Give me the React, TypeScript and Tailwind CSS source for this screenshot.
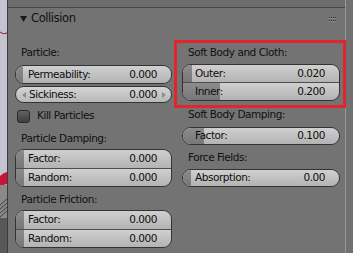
import React from 'react';

const font = { fontFamily: '"DejaVu Sans", "Liberation Sans", sans-serif' };

interface FieldRow {
  label: string;
  value: string;
  fill: number;
}

const Row: React.FC<FieldRow & { h: string; pr?: string }> = ({ label, value, fill, h, pr = 'pr-[14px]' }) => (
  <div className={`relative ${h} bg-linear-to-b from-[#d0d0d0] to-[#b3b3b3]`}>
    <div
      className="absolute left-0 top-0 bottom-0 bg-linear-to-b from-[#8c8c8c] to-[#777]"
      style={{ width: fill }}
    />
    <div className={`relative h-full flex items-center justify-between pl-[12px] ${pr} text-[#0e0e0e]`}>
      <span>{label}</span>
      <span>{value}</span>
    </div>
  </div>
);

const FieldBlock: React.FC<{ rows: FieldRow[]; heights: string[]; className?: string }> = ({
  rows,
  heights,
  className = '',
}) => (
  <div className={`rounded-[9px] border border-[#333] overflow-hidden ${className}`}>
    {rows.map((r, i) => (
      <div key={r.label} className={i > 0 ? 'border-t border-[#4d4d4d]' : ''}>
        <Row {...r} h={heights[i]} />
      </div>
    ))}
  </div>
);

const Label: React.FC<{ text: string; className?: string }> = ({ text, className = '' }) => (
  <div className={`h-[16px] flex items-center pl-[6px] text-[#101010] ${className}`}>{text}</div>
);

const Arrow: React.FC<{ dir: 'left' | 'right' }> = ({ dir }) => (
  <svg width="4" height="6" viewBox="0 0 4 6" className="shrink-0">
    <polygon points={dir === 'left' ? '4,0 0,3 4,6' : '0,0 4,3 0,6'} fill="#8c8c8c" />
  </svg>
);

const App: React.FC = () => {
  return (
    <div
      className="relative w-[353px] h-[253px] flex overflow-hidden bg-[#737373] text-[10.5px] tracking-[-0.45px]"
      style={font}
    >
      {/* viewport slice on the left */}
      <svg width="7" height="253" viewBox="0 0 7 253" className="shrink-0">
        <rect x="0" y="0" width="7" height="253" fill="#c5c3cf" />
        <path d="M0 32 Q3 35 7 33" stroke="#7a2436" strokeWidth="1" fill="none" />
        <path d="M0 176 L4 173 L7 172 L7 184 L0 186 Z" fill="#c9143a" />
        <rect x="0" y="185" width="7" height="68" fill="#8a8a8a" />
        <path d="M0 205 L7 199 M0 209 L7 203 M0 213 L7 207 M0 217 L7 211" stroke="#3e3e3e" strokeWidth="1" />
        <rect x="0" y="218" width="7" height="35" fill="#585858" />
      </svg>
      <div className="w-[1px] shrink-0 bg-[#3c3c3c]" />

      <div className="flex-1 flex flex-col bg-[#737373]">
        <div className="h-[8px] shrink-0 bg-[#6c6c6c] border-b border-[#474747]" />
        <div className="h-[22px] shrink-0 flex items-center pl-[12px] pr-[8px] text-[11.5px] tracking-[-0.4px] text-[#111]">
          <svg width="7" height="6" viewBox="0 0 7 6" className="shrink-0">
            <polygon points="0,0 7,0 3.5,6" fill="#1a1a1a" />
          </svg>
          <span className="ml-[4px]">Collision</span>
          <svg width="9" height="5" viewBox="0 0 9 5" className="ml-auto">
            {[0, 2, 4, 6].map((x) => (
              <g key={x}>
                <rect x={x + 1} y="0" width="1" height="1" fill="#2e2e2e" />
                <rect x={x + 1} y="3" width="1" height="1" fill="#2e2e2e" />
                <rect x={x + 1} y="1" width="1" height="1" fill="#9a9a9a" />
                <rect x={x + 1} y="4" width="1" height="1" fill="#9a9a9a" />
              </g>
            ))}
          </svg>
        </div>

        <div className="flex pl-[7px] gap-[10px]">
          {/* left column */}
          <div className="w-[157px] flex flex-col">
            <Label text="Particle:" className="mt-[15px]" />
            <div className="mt-[4px] rounded-[9px] border border-[#333] overflow-hidden">
              <Row label="Permeability:" value="0.000" fill={7} h="h-[17px]" />
            </div>
            <div className="mt-[2px] h-[17px] rounded-[9px] border border-[#333] bg-linear-to-b from-[#d4d4d4] to-[#b8b8b8] flex items-center pl-[6px] pr-[5px] text-[#0e0e0e]">
              <Arrow dir="left" />
              <span className="ml-[3px]">Sickiness:</span>
              <span className="ml-auto mr-[5px]">0.000</span>
              <Arrow dir="right" />
            </div>
            <div className="mt-[6px] h-[14px] flex items-center pl-[2px] text-[#101010]">
              <div className="w-[13px] h-[13px] rounded-[3px] border border-[#2a2a2a] bg-linear-to-b from-[#626262] to-[#3e3e3e]" />
              <span className="ml-[7px]">Kill Particles</span>
            </div>
            <Label text="Particle Damping:" className="mt-[8px]" />
            <FieldBlock
              className="mt-[2px]"
              heights={['h-[18px]', 'h-[17px]']}
              rows={[
                { label: 'Factor:', value: '0.000', fill: 8 },
                { label: 'Random:', value: '0.000', fill: 8 },
              ]}
            />
            <Label text="Particle Friction:" className="mt-[5px]" />
            <FieldBlock
              className="mt-[2px]"
              heights={['h-[18px]', 'h-[17px]']}
              rows={[
                { label: 'Factor:', value: '0.000', fill: 8 },
                { label: 'Random:', value: '0.000', fill: 8 },
              ]}
            />
          </div>

          {/* right column */}
          <div className="w-[158px] flex flex-col">
            <Label text="Soft Body and Cloth:" className="mt-[15px]" />
            <FieldBlock
              className="mt-[3px]"
              heights={['h-[17px]', 'h-[17px]']}
              rows={[
                { label: 'Outer:', value: '0.020', fill: 9 },
                { label: 'Inner:', value: '0.200', fill: 37 },
              ]}
            />
            <Label text="Soft Body Damping:" className="mt-[6px]" />
            <FieldBlock
              className="mt-[4px]"
              heights={['h-[16px]']}
              rows={[{ label: 'Factor:', value: '0.100', fill: 21 }]}
            />
            <Label text="Force Fields:" className="mt-[5px]" />
            <FieldBlock
              className="mt-[3px]"
              heights={['h-[16px]']}
              rows={[{ label: 'Absorption:', value: '0.00', fill: 8 }]}
            />
          </div>
        </div>
      </div>

      <div className="w-[1px] shrink-0 bg-[#989898]" />
      <div className="w-[7px] shrink-0 bg-[#707070]" />

      {/* red highlight annotation */}
      <div className="absolute left-[174px] top-[40px] w-[172px] h-[68px] border-[3px] border-[#e1252b] pointer-events-none" />
    </div>
  );
};

export default App;
